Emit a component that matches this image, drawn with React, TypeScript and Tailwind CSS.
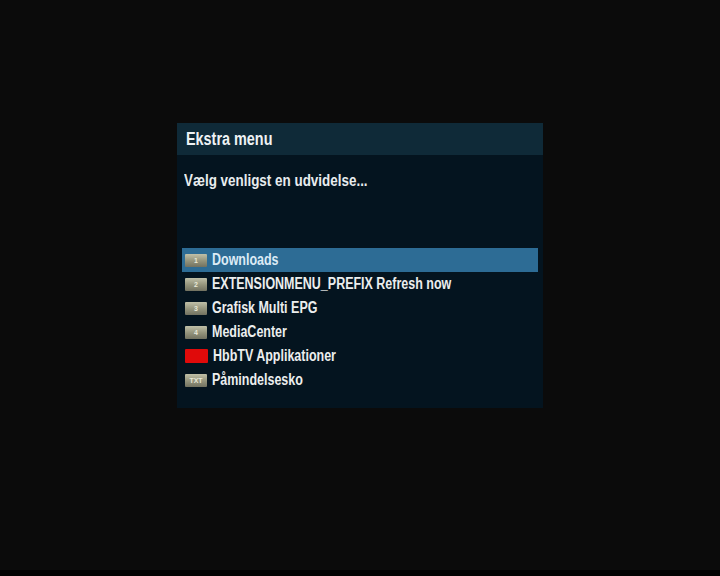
const items = [
  { key: "1", label: "Downloads" },
  { key: "2", label: "EXTENSIONMENU_PREFIX Refresh now" },
  { key: "3", label: "Grafisk Multi EPG" },
  { key: "4", label: "MediaCenter" },
  { key: "red", label: "HbbTV Applikationer" },
  { key: "text", label: "Påmindelsesko" },
];

function KeyIcon({ k }: { k: string }) {
  if (k === "red") {
    return <span className="w-[23px] h-[14px] bg-[#e00a0a] rounded-[1px] shrink-0" />;
  }
  return (
    <span className="w-[22px] h-[13px] rounded-[1px] shrink-0 bg-gradient-to-b from-[#c0c0a8] via-[#96967e] to-[#727260] flex items-center justify-center text-[7px] leading-none font-bold text-[#e8e8d8]">
      {k === "text" ? "TXT" : k}
    </span>
  );
}

export default function App() {
  return (
    <div
      className="w-[720px] h-[576px] bg-[#0b0b0b] relative overflow-hidden"
      style={{ fontFamily: '"Liberation Sans", Arial, sans-serif' }}
    >
      <div className="absolute left-[177px] top-[123px] w-[366px] flex flex-col">
        <div className="h-[32px] bg-[#0f2a38] flex items-center pl-[9px] text-[18px] font-bold text-[#eef2f4]">
          <span className="inline-block origin-left scale-x-[0.8] whitespace-nowrap">Ekstra menu</span>
        </div>
        <div className="h-[253px] bg-[#04141f] flex flex-col pt-[16px]">
          <div className="pl-[7px] text-[17px] font-bold text-[#e8ecee] leading-[20px]">
            <span className="inline-block origin-left scale-x-[0.79] whitespace-nowrap">Vælg venligst en udvidelse...</span>
          </div>
          <div className="mt-[57px] flex flex-col px-[5px]">
            {items.map((it, i) => (
              <div
                key={i}
                className={
                  "h-[24px] flex items-center gap-[5px] pl-[3px] " +
                  (i === 0 ? "bg-[#2d6c95] text-[#dcebf5]" : "text-[#eceeee]")
                }
              >
                <KeyIcon k={it.key} />
                <span className="inline-block origin-left scale-x-[0.78] whitespace-nowrap text-[16px] font-bold leading-none -mt-[1px]">
                  {it.label}
                </span>
              </div>
            ))}
          </div>
        </div>
      </div>
      <div className="absolute left-0 bottom-0 w-full h-[6px] bg-[#020202]" />
    </div>
  );
}
